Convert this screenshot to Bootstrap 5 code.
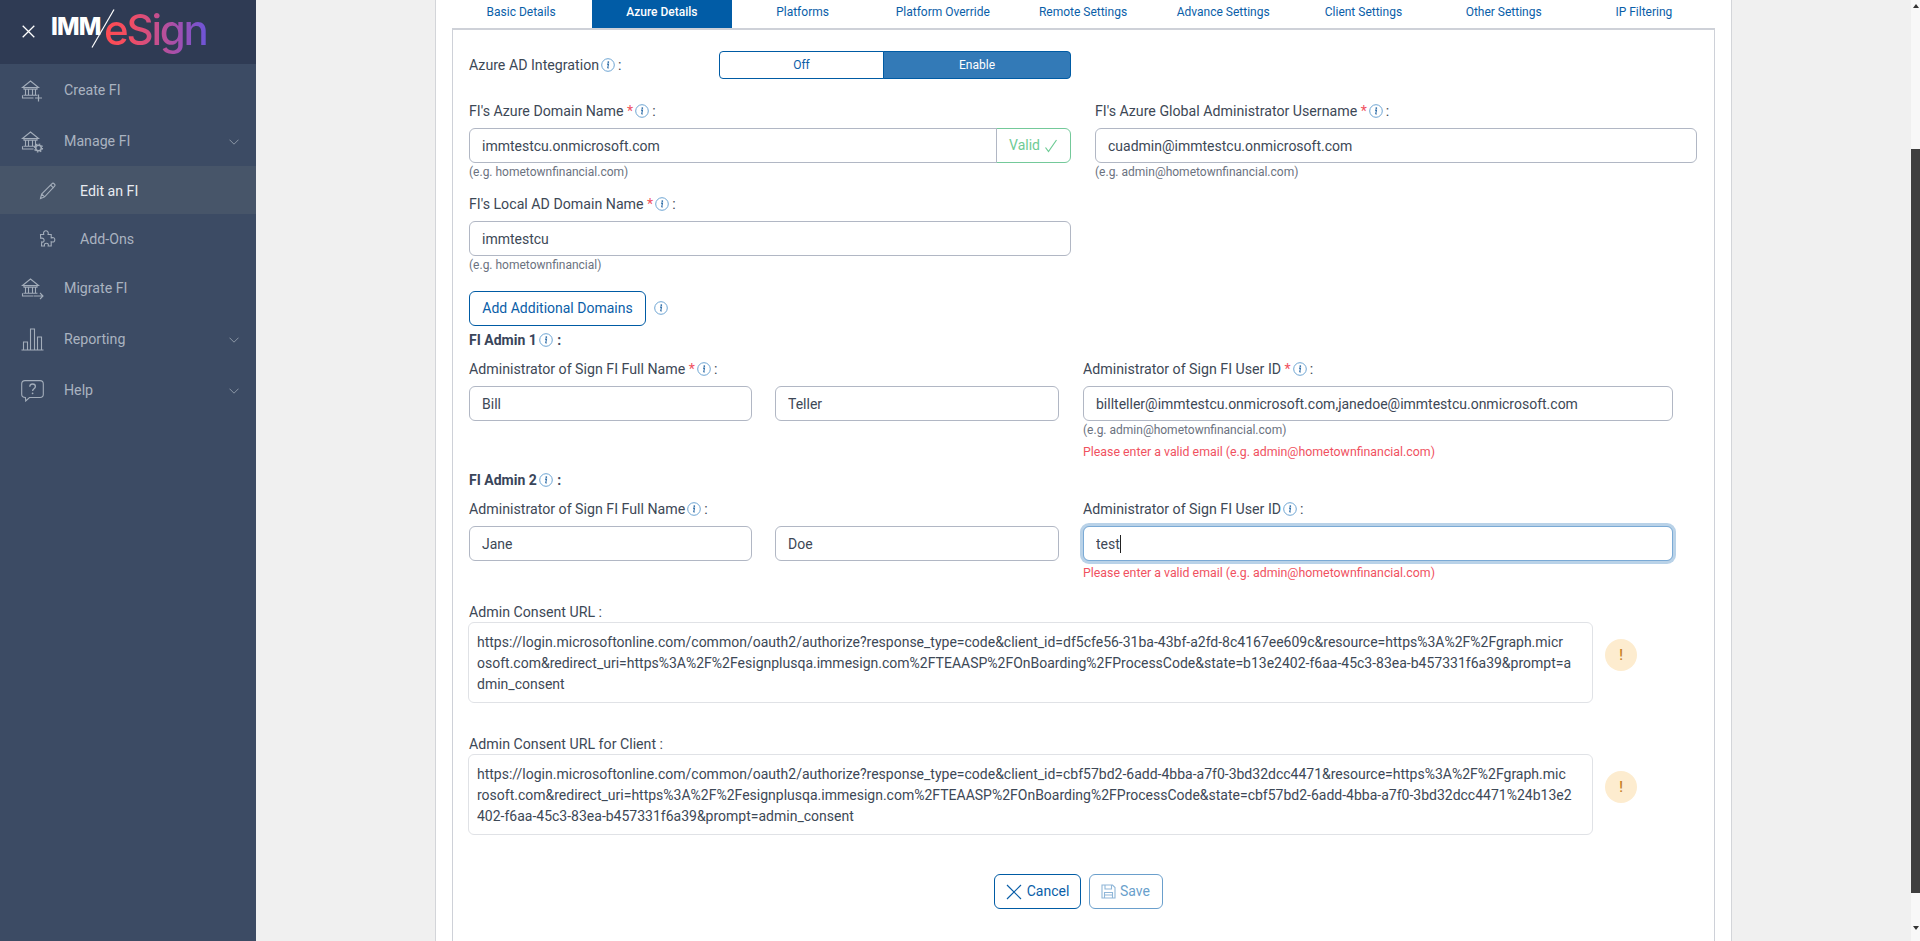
<!DOCTYPE html>
<html lang="en">
<head>
<meta charset="utf-8">
<title>IMM eSign</title>
<link rel="stylesheet" href="https://cdn.jsdelivr.net/npm/bootstrap@5.3.0/dist/css/bootstrap.min.css">
<style>
html,body{height:941px;overflow:hidden}
body{font-family:Roboto,"Liberation Sans",sans-serif;font-size:14px;color:#3d4856;background:#f0f0f0;line-height:21px}
.side{width:256px;flex:none;background:#3c4b64;height:941px}
.side-top{height:64px;background:#2f3b54;position:relative}
.logo-x{margin:25px 0 0 22px;flex:none}
.logo-wrap{position:relative;margin-left:16px;width:160px;height:64px}
.logo-imm{position:absolute;left:0;top:12px;font-family:Inter,sans-serif;font-weight:800;font-size:24px;line-height:30px;letter-spacing:-.9px;color:#fff}
.logo-slash{position:absolute;left:40px;top:9px}
.logo-esign{position:absolute;left:53px;top:3px;font-family:Inter,sans-serif;font-weight:500;font-size:42px;line-height:54px;letter-spacing:-2.2px;background:linear-gradient(90deg,#ff4b52 0,#f24d62 25%,#c84f8c 50%,#9c50b4 75%,#6c55d8 100%);-webkit-background-clip:text;background-clip:text;color:transparent}
.menu-link{display:flex;align-items:center;height:51px;padding:2px 17px 0 21px;color:#aab3c0;font-size:14.2px}
.menu-link:hover{color:#aab3c0}
.menu-ico{width:43px;flex:none;display:flex}
.menu-sub{height:48px;padding-left:39px}
.menu-sub .menu-ico{width:41px}
.menu-on{background:#475569;color:#e8ebf0}
.menu-on:hover{color:#e8ebf0}
.menu-ch{margin-left:auto}
.page-wrap{flex:1 1 auto;min-width:0;padding-left:179px}
.panel-sheet{width:1297px;height:941px;background:#fff;border:solid #d3d5d9;border-width:0 1px;padding:0 16px 0 16px}
.tab-row{height:28px;flex-wrap:nowrap;margin:0 1px 0 -1px}
.tab-item{flex:1 1 0;height:28px;display:flex;align-items:center;justify-content:center;padding:0 0 4px;font-size:12px;color:#0a5ea8;line-height:18px}
.tab-item:hover{color:#0a5ea8}
.tab-item.tab-cur{background:#015ca6;color:#fff;font-weight:500;margin:0 .5px}
.tab-pane-box{border:solid #ced1d8;border-width:1px 1px 0 1px;height:913px;padding:22px 17px 0 16px;box-shadow:inset 0 1px 0 #ced1d8}
.fld-label{line-height:21px;height:21px;margin:0 0 6px;white-space:nowrap;font-size:14.2px}
.req{color:#f0525f}
.tip{width:14px;height:14px;vertical-align:-2px;margin:0 3px 0 2px}
.az-row{height:28px;margin-bottom:22px}
.az-label{width:250px;flex:none;font-size:14.2px}
.tog-grp{width:352px;height:28px}
.tog-btn{font-size:12px;height:28px;padding:0;line-height:26px;border-color:#005ba4;border-radius:4px}
.tog-grp .tog-off{flex:0 0 165px;background:#fff;color:#0a5ea8}
.tog-grp .tog-on{flex:1 1 auto;background:#337ab7;color:#fff;--bs-btn-hover-bg:#337ab7;--bs-btn-hover-color:#fff}
.fld{height:35px;padding:0 12px;font-size:14px;color:#3d4856;border:1px solid #b1b7c4;border-radius:6px;line-height:21px}
.fld:focus{color:#3d4856;border-color:#7baad5;box-shadow:0 0 0 3px #b9d2e8;caret-color:transparent}
.valid-tag{width:75px;flex:none;justify-content:center;gap:4px;height:35px;font-size:14px;color:#6ecb95;background:#fff;border:1px solid #74c99a;border-radius:0 6px 6px 0;padding:0}
.hint-txt{font-size:12px;line-height:18px;height:18px;color:#6b7280;white-space:nowrap}
.err-txt{font-size:12.35px;line-height:18px;height:18px;color:#f0525f;white-space:nowrap}
.gap-lbl{margin-top:13px}
.add-row{margin-top:16px;height:36px;margin-bottom:4px}
.out-btn{width:177px;height:35px;padding:0;font-size:14px;color:#0a5ea8;border:1px solid #005ba4;border-radius:6px;background:#fff;line-height:21px}
.adm-title{font-weight:700;height:21px;line-height:21px;margin:0 0 8px;color:#39455a}
.adm-title .tip{margin-right:1px}
.adm-gap{margin-top:9px}
.adm-grid{display:grid;grid-template-columns:590px 590px;column-gap:24px}
.name-pair{display:grid;grid-template-columns:283px 1fr;column-gap:23px}
.caret-wrap{position:relative}
.caret-mark{position:absolute;left:37px;top:9px;width:1px;height:18px;background:#222}
.url-label{line-height:21px;margin-bottom:-1px;font-size:14.2px}
.url-label-a{margin-top:20px}
.url-label-b{margin-top:31px}
.url-row{gap:12px;width:1170px;margin-left:-1px}
.url-box{width:1125px;height:81px;flex:none;border:1px solid #e0e2e6;border-radius:6px;padding:9px 8px 0;line-height:21px;white-space:nowrap;overflow:hidden;color:#3d4856}
.warn-dot{width:32px;height:32px;flex:none;border-radius:50%;background:#fdeccf;color:#c77f1f;font-weight:500;display:flex;align-items:center;justify-content:center;margin-bottom:15px;line-height:1}
.act-row{margin-top:39px;gap:8px;padding-right:10px}
.act-btn{height:35px;padding:0;font-size:14px;display:flex;align-items:center;justify-content:center;gap:4px;background:#fff;border-radius:6px;line-height:21px}
.act-cancel{width:87px;color:#0a5ea8;border:1px solid #005ba4}
.act-save{width:74px;color:#6a9fcc;border:1px solid #6a9fcc}
.fake-bar{width:9px;flex:none;height:941px;background:#f8f8f8;padding:0}
.bar-up{width:0;height:0;margin:4px auto 0;border:3px solid transparent;border-top:0;border-bottom:4px solid #333}
.bar-thumb{height:744px;background:#3f3f3f;margin-top:141px}
.bar-dn{width:0;height:0;margin:33px auto 0;border:3px solid transparent;border-bottom:0;border-top:4px solid #333}
</style>
</head>
<body class="d-flex m-0">
<svg width="0" height="0" class="position-absolute">
  <defs>
    <symbol id="i-info" viewBox="0 0 14 14">
      <circle cx="7" cy="7" r="6.3" fill="none" stroke="#6ea5d3" stroke-width="1"/>
      <circle cx="7.3" cy="4.1" r=".9" fill="#2a6aa6"/>
      <path d="M6 6.1h1.5l-.7 3.4c-.1.4.2.5.9.2" fill="none" stroke="#2a6aa6" stroke-width="1.1"/>
    </symbol>
    <symbol id="i-bank" viewBox="0 0 22 22">
      <g fill="none" stroke="#a3adba" stroke-width="1.1">
        <path d="M1.5 7.5 9.5 1l8 6.5z"/>
        <path d="M3 7.5v1.6h13V7.5"/>
        <path d="M4.5 9.1v6M7.5 9.1v6M11.5 9.1v6M14.5 9.1v6"/>
        <path d="M2.5 15.2h14M1.5 15.2v2.8h11"/>
      </g>
    </symbol>
    <symbol id="i-chev" viewBox="0 0 10 6">
      <path d="M.5.7 5 5.2 9.5.7" fill="none" stroke="#8c97a6" stroke-width="1"/>
    </symbol>
  </defs>
</svg>

<aside class="side">
  <div class="side-top d-flex">
    <svg class="logo-x" width="13" height="13" viewBox="0 0 13 13"><path d="M.7.7l11.6 11.6M12.3.7.7 12.3" stroke="#fff" stroke-width="1.3" fill="none"/></svg>
    <div class="logo-wrap">
      <span class="logo-imm">IMM</span>
      <svg class="logo-slash" width="24" height="40" viewBox="0 0 24 40"><path d="M23 .5 1 38.5" stroke="#fff" stroke-width="1.2"/></svg>
      <span class="logo-esign">eSign</span>
    </div>
  </div>
  <nav class="nav flex-column">
    <a class="nav-link menu-link" href="#"><span class="menu-ico"><svg width="22" height="22" viewBox="0 0 22 22"><use href="#i-bank"/><path d="M17.5 14.500v7M14 18h7" stroke="#a3adba" stroke-width="1.2" fill="none"/></svg></span>Create FI</a>
    <a class="nav-link menu-link" href="#"><span class="menu-ico"><svg width="23" height="22" viewBox="0 0 23 22"><use href="#i-bank" width="22" height="22"/><circle cx="17.5" cy="17" r="2.8" fill="#3c4b64" stroke="#a3adba" stroke-width="1.5"/><circle cx="17.5" cy="17" r="4" fill="none" stroke="#a3adba" stroke-width="1.2" stroke-dasharray="1.6 1.5"/></svg></span>Manage FI<svg class="menu-ch" width="10" height="6"><use href="#i-chev"/></svg></a>
    <a class="nav-link menu-link menu-sub menu-on" href="#"><span class="menu-ico"><svg width="18" height="18" viewBox="0 0 18 18"><path d="M1.5 16.500 2.600 12 12.800 1.800c.7-.7 1.700-.7 2.400 0l.2.2c.7.7.7 1.700 0 2.400L5.600 14.900zM2.600 12l3 2.900M11.600 3l3.100 3.100" fill="none" stroke="#a3adba" stroke-width="1.1"/></svg></span>Edit an FI</a>
    <a class="nav-link menu-link menu-sub" href="#"><span class="menu-ico"><svg width="18" height="18" viewBox="0 0 18 18"><path d="M1.500 4.500h3.200c-.8-2.600 1-3.800 2.200-3.800s3 1.200 2.200 3.800h3.100v3.400c2.600-.7 3.600 0 3.600 1.900s-1 2.700-3.600 2V16H9.200c.5-2-.2-2.800-1.800-2.800s-2.400.8-1.900 2.800h-3l.2-4.100c1.600.6 2.400-.2 2.400-1.700S4 7.600 1.700 8.300z" fill="none" stroke="#a3adba" stroke-width="1.1"/></svg></span>Add-Ons</a>
    <a class="nav-link menu-link" href="#"><span class="menu-ico"><svg width="23" height="22" viewBox="0 0 23 22"><use href="#i-bank" width="22" height="22"/><path d="M13 18h9M19 15l3 3-3 3" stroke="#a3adba" stroke-width="1.1" fill="none"/></svg></span>Migrate FI</a>
    <a class="nav-link menu-link" href="#"><span class="menu-ico"><svg width="23" height="23" viewBox="0 0 23 23"><path d="M.5 22h22M2.500 22v-8h4v8M9.500 22V1h4v21M16.500 22V9h4v13" fill="none" stroke="#a3adba" stroke-width="1.1"/></svg></span>Reporting<svg class="menu-ch" width="10" height="6"><use href="#i-chev"/></svg></a>
    <a class="nav-link menu-link" href="#"><span class="menu-ico"><svg width="23" height="22" viewBox="0 0 23 22"><path d="M4 .6h15c1.800 0 3.300 1.500 3.300 3.300v10.400c0 1.800-1.500 3.200-3.300 3.200H8.500L4.700 21l-.3-3.500C2.200 17.500.7 16.100.7 14.300V3.900C.7 2.100 2.200.6 4 .6z" fill="none" stroke="#a3adba" stroke-width="1.1"/><path d="M8.800 6.800c0-1.800 1.200-2.800 2.800-2.800s2.800 1 2.800 2.500c0 2.300-2.800 2.300-2.800 4.500" fill="none" stroke="#a3adba" stroke-width="1.300"/><circle cx="11.600" cy="13.300" r=".9" fill="#a3adba"/></svg></span>Help<svg class="menu-ch" width="10" height="6"><use href="#i-chev"/></svg></a>
  </nav>
</aside>

<main class="page-wrap">
  <div class="panel-sheet">
    <nav class="nav tab-row">
      <a class="nav-link tab-item" href="#">Basic Details</a>
      <a class="nav-link tab-item tab-cur" href="#">Azure Details</a>
      <a class="nav-link tab-item" href="#">Platforms</a>
      <a class="nav-link tab-item" href="#">Platform Override</a>
      <a class="nav-link tab-item" href="#">Remote Settings</a>
      <a class="nav-link tab-item" href="#">Advance Settings</a>
      <a class="nav-link tab-item" href="#">Client Settings</a>
      <a class="nav-link tab-item" href="#">Other Settings</a>
      <a class="nav-link tab-item" href="#">IP Filtering</a>
    </nav>
    <div class="tab-pane-box">
      <form onsubmit="return false">
        <div class="d-flex align-items-center az-row">
          <div class="az-label">Azure AD Integration<svg class="tip"><use href="#i-info"/></svg>:</div>
          <div class="btn-group tog-grp" role="group">
            <button type="button" class="btn tog-btn tog-off">Off</button>
            <button type="button" class="btn tog-btn tog-on">Enable</button>
          </div>
        </div>

        <div class="row">
          <div class="col-6">
            <div class="fld-label">FI's Azure Domain Name <span class="req">*</span><svg class="tip"><use href="#i-info"/></svg>:</div>
            <div class="input-group flex-nowrap">
              <input class="form-control fld" value="immtestcu.onmicrosoft.com">
              <span class="input-group-text valid-tag">Valid <svg width="14" height="14" viewBox="0 0 14 14"><path d="M1.500 8.500 4.500 12.500 12.500 1" fill="none" stroke="#6ecb95" stroke-width="1.200"/></svg></span>
            </div>
            <div class="hint-txt">(e.g. hometownfinancial.com)</div>
          </div>
          <div class="col-6">
            <div class="fld-label">FI's Azure Global Administrator Username <span class="req">*</span><svg class="tip"><use href="#i-info"/></svg>:</div>
            <input class="form-control fld" value="cuadmin@immtestcu.onmicrosoft.com">
            <div class="hint-txt">(e.g. admin@hometownfinancial.com)</div>
          </div>
        </div>

        <div class="row gap-lbl">
          <div class="col-6">
            <div class="fld-label">FI's Local AD Domain Name <span class="req">*</span><svg class="tip"><use href="#i-info"/></svg>:</div>
            <input class="form-control fld" value="immtestcu">
            <div class="hint-txt">(e.g. hometownfinancial)</div>
          </div>
        </div>

        <div class="d-flex align-items-center add-row gap-2">
          <button type="button" class="btn out-btn">Add Additional Domains</button>
          <svg class="tip m-0"><use href="#i-info"/></svg>
        </div>

        <div class="adm-title">FI Admin 1<svg class="tip"><use href="#i-info"/></svg> :</div>
        <div class="adm-grid">
          <div>
            <div class="fld-label">Administrator of Sign FI Full Name <span class="req">*</span><svg class="tip"><use href="#i-info"/></svg>:</div>
            <div class="name-pair">
              <input class="form-control fld" value="Bill">
              <input class="form-control fld" value="Teller">
            </div>
          </div>
          <div>
            <div class="fld-label">Administrator of Sign FI User ID <span class="req">*</span><svg class="tip"><use href="#i-info"/></svg>:</div>
            <input class="form-control fld" value="billteller@immtestcu.onmicrosoft.com,janedoe@immtestcu.onmicrosoft.com">
            <div class="hint-txt">(e.g. admin@hometownfinancial.com)</div>
            <div class="err-txt mt-1">Please enter a valid email (e.g. admin@hometownfinancial.com)</div>
          </div>
        </div>

        <div class="adm-title adm-gap">FI Admin 2<svg class="tip"><use href="#i-info"/></svg> :</div>
        <div class="adm-grid">
          <div>
            <div class="fld-label">Administrator of Sign FI Full Name<svg class="tip"><use href="#i-info"/></svg>:</div>
            <div class="name-pair">
              <input class="form-control fld" value="Jane">
              <input class="form-control fld" value="Doe">
            </div>
          </div>
          <div>
            <div class="fld-label">Administrator of Sign FI User ID<svg class="tip"><use href="#i-info"/></svg>:</div>
            <div class="caret-wrap">
              <input id="focusme" class="form-control fld" value="test" autofocus>
              <span class="caret-mark"></span>
            </div>
            <div class="err-txt" style="margin-top:3px">Please enter a valid email (e.g. admin@hometownfinancial.com)</div>
          </div>
        </div>

        <div class="url-label url-label-a">Admin Consent URL :</div>
        <div class="d-flex align-items-center url-row">
          <div class="url-box">https://login.microsoftonline.com/common/oauth2/authorize?response_type=code&amp;client_id=df5cfe56-31ba-43bf-a2fd-8c4167ee609c&amp;resource=https%3A%2F%2Fgraph.micr<br>osoft.com&amp;redirect_uri=https%3A%2F%2Fesignplusqa.immesign.com%2FTEAASP%2FOnBoarding%2FProcessCode&amp;state=b13e2402-f6aa-45c3-83ea-b457331f6a39&amp;prompt=a<br>dmin_consent</div>
          <div class="warn-dot">!</div>
        </div>

        <div class="url-label url-label-b">Admin Consent URL for Client :</div>
        <div class="d-flex align-items-center url-row">
          <div class="url-box">https://login.microsoftonline.com/common/oauth2/authorize?response_type=code&amp;client_id=cbf57bd2-6add-4bba-a7f0-3bd32dcc4471&amp;resource=https%3A%2F%2Fgraph.mic<br>rosoft.com&amp;redirect_uri=https%3A%2F%2Fesignplusqa.immesign.com%2FTEAASP%2FOnBoarding%2FProcessCode&amp;state=cbf57bd2-6add-4bba-a7f0-3bd32dcc4471%24b13e2<br>402-f6aa-45c3-83ea-b457331f6a39&amp;prompt=admin_consent</div>
          <div class="warn-dot">!</div>
        </div>

        <div class="d-flex justify-content-center act-row">
          <button type="button" class="btn act-btn act-cancel"><svg width="18" height="18" viewBox="0 0 18 18"><path d="M2 2l14 14M16 2 2 16" fill="none" stroke="#0a5ea8" stroke-width="1.200"/></svg>Cancel</button>
          <button type="button" class="btn act-btn act-save"><svg width="15" height="15" viewBox="0 0 15 15"><path d="M1 1h10.500L14 3.500V14H1zM4 1v4h6.500V1M3.500 14V8.500h8V14M3.500 11h8" fill="none" stroke="#8fb6d8" stroke-width="1.100"/></svg>Save</button>
        </div>
      </form>
    </div>
  </div>
</main>

<div class="fake-bar">
  <div class="bar-up"></div>
  <div class="bar-thumb"></div>
  <div class="bar-dn"></div>
</div>
<script src="https://cdn.jsdelivr.net/npm/bootstrap@5.3.0/dist/js/bootstrap.bundle.min.js"></script>
<script>
var f=document.getElementById('focusme');f.focus();f.setSelectionRange(4,4);
</script>
</body>
</html>
